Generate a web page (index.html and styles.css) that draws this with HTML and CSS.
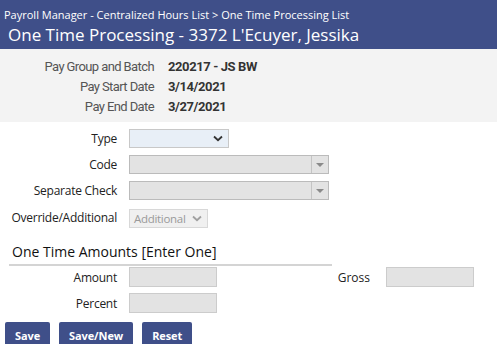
FILE: index.html
```html
<!DOCTYPE html>
<html lang="en-us">
	<head>
		<meta charset="UTF-8">
		<title>One Time Processing</title>
		<link rel="stylesheet" href="styles.css">
	</head>
	<body>
		<section class="pageHeader"> <!-- Breadcrumb and title -->
			<div class="crumbs">Payroll Manager - Centralized Hours List &gt; One Time Processing List</div>
			<h1>One Time Processing - 3372 L'Ecuyer, Jessika</h1>
		</section>

		<section class="infoBand"> <!-- Batch info -->
			<div class="infoGrid">
				<span class="infoLabel">Pay Group and Batch</span><span class="infoValue">220217 - JS BW</span>
				<span class="infoLabel">Pay Start Date</span><span class="infoValue">3/14/2021</span>
				<span class="infoLabel">Pay End Date</span><span class="infoValue">3/27/2021</span>
			</div>
		</section>

		<section class="formGrid"> <!-- Main fields -->
			<label class="fieldLabel">Type</label>
			<div class="selectBox typeBox">
				<svg class="chev" width="10" height="7" viewBox="0 0 10 7"><path d="M1 1.5 L5 5.2 L9 1.5" fill="none" stroke="#333" stroke-width="1.8"/></svg>
			</div>

			<label class="fieldLabel">Code</label>
			<div class="comboBox">
				<div class="comboText"></div>
				<div class="comboArrow"><span class="tri"></span></div>
			</div>

			<label class="fieldLabel">Separate Check</label>
			<div class="comboBox">
				<div class="comboText"></div>
				<div class="comboArrow"><span class="tri"></span></div>
			</div>

			<label class="fieldLabel">Override/Additional</label>
			<div class="selectBox addBox">
				<span>Additional</span>
				<svg class="chev" width="10" height="7" viewBox="0 0 10 7"><path d="M1 1.5 L5 5.2 L9 1.5" fill="none" stroke="#A0A0A0" stroke-width="1.8"/></svg>
			</div>
		</section>

		<section class="amounts"> <!-- One time amounts -->
			<h2>One Time Amounts [Enter One]</h2>
			<div class="amountGrid">
				<label class="fieldLabel">Amount</label>
				<div class="textBox"></div>
				<label class="grossLabel">Gross</label>
				<div class="textBox"></div>

				<label class="fieldLabel">Percent</label>
				<div class="textBox"></div>
			</div>
		</section>

		<section class="buttons">
			<button class="btn">Save</button>
			<button class="btn">Save/New</button>
			<button class="btn">Reset</button>
		</section>
	</body>
</html>
```

FILE: styles.css
```css
html
{
	margin: 0;
	padding: 0;
	background: #FFFFFF;
}

body
{
	margin: 0;
	padding: 0;
	font-family: "Open Sans", sans-serif;
	color: #222222;
}

.pageHeader
{
	background: #3F4F89;
	color: #FFFFFF;
	height: 49px;
	padding: 0 0 0 4px;
	box-sizing: border-box;
}

.crumbs
{
	font-size: 11px;
	line-height: 16px;
	padding-top: 7px;
}

h1
{
	font-size: 17px;
	font-weight: normal;
	line-height: 24px;
	margin: 0 0 0 4px;
}

.infoBand
{
	background: #F3F3F3;
	height: 73px;
	padding-top: 8px;
	box-sizing: border-box;
}

.infoGrid
{
	display: grid;
	grid-template-columns: 154px auto;
	column-gap: 14px;
	row-gap: 0;
	font-family: Roboto, sans-serif;
	font-size: 13px;
	line-height: 20px;
}

.infoLabel
{
	text-align: right;
	color: #555555;
	letter-spacing: -0.6px;
}

.infoValue
{
	font-weight: bold;
	color: #333333;
	letter-spacing: -0.4px;
}

.formGrid
{
	display: grid;
	grid-template-columns: 117px auto;
	column-gap: 12px;
	row-gap: 7px;
	padding-top: 7px;
	align-items: center;
	justify-items: start;
}

.fieldLabel
{
	justify-self: end;
	font-size: 12px;
	letter-spacing: -0.25px;
	white-space: nowrap;
}

.selectBox
{
	height: 19px;
	box-sizing: border-box;
	border: 1px solid #C8C8C8;
	display: flex;
	align-items: center;
	justify-content: flex-end;
	padding-right: 5px;
}

.typeBox
{
	width: 100px;
	background: #E8EFF7;
}

.addBox
{
	width: 79px;
	background: #F0F0F0;
	border-color: #D8D8D8;
	justify-content: space-between;
	padding-left: 4px;
	color: #9A9A9A;
	font-size: 11.5px;
	letter-spacing: -0.3px;
	margin-top: 2px;
}

.comboBox
{
	width: 200px;
	height: 19px;
	box-sizing: border-box;
	border: 1px solid #BBBBBB;
	background: #E3E3E3;
	display: flex;
}

.comboText
{
	flex: 1;
}

.comboArrow
{
	width: 16px;
	border-left: 1px solid #C4C4C4;
	display: flex;
	align-items: center;
	justify-content: center;
}

.tri
{
	width: 0;
	height: 0;
	border-left: 4px solid transparent;
	border-right: 4px solid transparent;
	border-top: 4px solid #8A8A8A;
}

.amounts
{
	padding-top: 14px;
}

h2
{
	font-size: 14px;
	font-weight: normal;
	line-height: 20px;
	margin: 0 0 0 9px;
	width: 320px;
	padding: 0 0 2px 3px;
	border-bottom: 2px solid #D4D4D4;
	color: #111111;
}

.amountGrid
{
	display: grid;
	grid-template-columns: 117px 88px 145px 88px;
	grid-template-rows: 20px 20px;
	column-gap: 12px;
	row-gap: 6px;
	padding-top: 1px;
	align-items: center;
}

.grossLabel
{
	justify-self: end;
	font-size: 12px;
	margin-right: 4px;
}

.textBox
{
	height: 20px;
	box-sizing: border-box;
	border: 1px solid #CCCCCC;
	background: #E3E3E3;
}

.buttons
{
	display: flex;
	gap: 9px;
	padding: 9px 0 0 5px;
}

.btn
{
	background: #3F4F89;
	color: #FFFFFF;
	border: none;
	border-radius: 2px 2px 0 0;
	height: 22px;
	padding: 5px 10px 0;
	font-family: "Open Sans", sans-serif;
	font-weight: bold;
	font-size: 11px;
	letter-spacing: -0.1px;
}
```
